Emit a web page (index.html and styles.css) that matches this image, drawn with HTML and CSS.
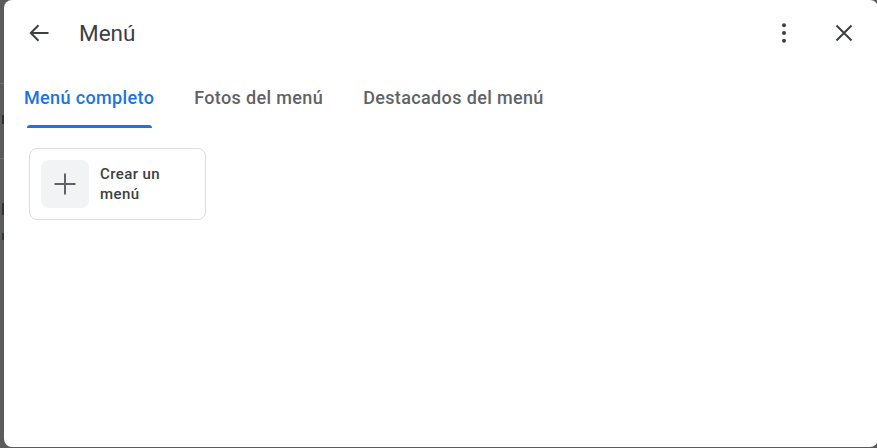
FILE: index.html
```html
<!DOCTYPE html>
<html lang="es">
<head>
<meta charset="utf-8">
<title>Menú</title>
<link rel="stylesheet" href="styles.css">
</head>
<body>
<div class="page">
  <div class="backdrop" aria-hidden="true">
    <div class="bd-line bd-line-1"></div>
    <div class="bd-mark bd-mark-1"></div>
    <div class="bd-line bd-line-2"></div>
    <div class="bd-mark bd-mark-2"></div>
    <div class="bd-mark bd-mark-3"></div>
  </div>
  <div class="dialog">
    <header class="header">
      <button class="icon-btn" aria-label="Atrás">
        <svg width="20" height="18" viewBox="0 0 20 18"><path d="M19.5 9H1.8M9.5 1.2L1.8 9l7.7 7.8" fill="none" stroke="#3c4043" stroke-width="2"/></svg>
      </button>
      <h1 class="title">Menú</h1>
      <div class="spacer"></div>
      <button class="icon-btn" aria-label="Más opciones">
        <svg width="6" height="20" viewBox="0 0 6 20"><circle cx="3" cy="2.3" r="2" fill="#3c4043"/><circle cx="3" cy="10" r="2" fill="#3c4043"/><circle cx="3" cy="17.7" r="2" fill="#3c4043"/></svg>
      </button>
      <button class="icon-btn close" aria-label="Cerrar">
        <svg width="18" height="18" viewBox="0 0 18 18"><path d="M1.5 1.5l15 15M16.5 1.5l-15 15" fill="none" stroke="#3c4043" stroke-width="2"/></svg>
      </button>
    </header>
    <nav class="tabs">
      <div class="tab active">Menú completo</div>
      <div class="tab">Fotos del menú</div>
      <div class="tab">Destacados del menú</div>
    </nav>
    <section class="content">
      <div class="card">
        <div class="card-icon">
          <svg width="22" height="22" viewBox="0 0 22 22"><path d="M11 0.5v21M0.5 11h21" fill="none" stroke="#5f6368" stroke-width="2"/></svg>
        </div>
        <div class="card-text">Crear un<br>menú</div>
      </div>
    </section>
  </div>
</div>
</body>
</html>
```
FILE: styles.css
```css
html, body {
  margin: 0;
  padding: 0;
  height: 100%;
  overflow: hidden;
  background: #5b5b5b;
  font-family: Roboto, "Noto Sans", Arial, sans-serif;
}

.page {
  display: flex;
  height: 448px;
  width: 877px;
}

.backdrop {
  position: relative;
  width: 4px;
  flex: none;
  background: #5b5b5b;
  overflow: hidden;
}

.bd-line {
  position: absolute;
  left: 0;
  width: 4px;
  height: 1px;
  background: #6c6c6c;
}
.bd-line-1 { top: 83px; }
.bd-line-2 { top: 158px; }

.bd-mark {
  position: absolute;
  right: 0;
  width: 2px;
  background: #2e2e2e;
}
.bd-mark-1 { top: 115px; height: 9px; }
.bd-mark-2 { top: 203px; height: 12px; background: #2b3142; }
.bd-mark-3 { top: 233px; height: 7px; background: #29344e; }

.dialog {
  flex: none;
  width: 874px;
  height: 447px;
  background: #fff;
  border-radius: 8px;
  display: flex;
  flex-direction: column;
}

.header {
  display: flex;
  align-items: center;
  height: 66px;
  padding: 0 14px 0 15px;
  flex: none;
}

.icon-btn {
  width: 40px;
  height: 40px;
  border: 0;
  padding: 0;
  background: transparent;
  display: flex;
  align-items: center;
  justify-content: center;
  flex: none;
}

.icon-btn.close {
  margin-left: 20px;
}

.title {
  margin: 0 0 0 20px;
  font-size: 22.5px;
  font-weight: 400;
  color: #3c4043;
  line-height: 28px;
}

.spacer {
  flex: 1;
}

.tabs {
  display: flex;
  gap: 40px;
  height: 62px;
  padding: 0 20px;
  flex: none;
}

.tab {
  display: flex;
  align-items: center;
  position: relative;
  font-size: 18px;
  font-weight: 500;
  letter-spacing: 0.36px;
  color: #5f6368;
  height: 62px;
}

.tab.active {
  color: #1a73e8;
}

.tab.active::after {
  content: "";
  position: absolute;
  left: 3px;
  right: 2px;
  bottom: 0;
  height: 3px;
  background: #1a73e8;
  border-radius: 3px 3px 0 0;
}

.content {
  padding: 20px 25px;
  display: flex;
  align-items: flex-start;
}

.card {
  display: flex;
  align-items: center;
  gap: 11px;
  width: 154px;
  height: 48px;
  padding: 11px 10px 11px 11px;
  border: 1px solid #dadce0;
  border-radius: 8px;
  box-sizing: content-box;
}

.card-icon {
  width: 48px;
  height: 48px;
  border-radius: 8px;
  background: #f1f3f4;
  display: flex;
  align-items: center;
  justify-content: center;
  flex: none;
}

.card-text {
  font-size: 15px;
  font-weight: 500;
  line-height: 20px;
  color: #3c4043;
  letter-spacing: 0.4px;
}
```
